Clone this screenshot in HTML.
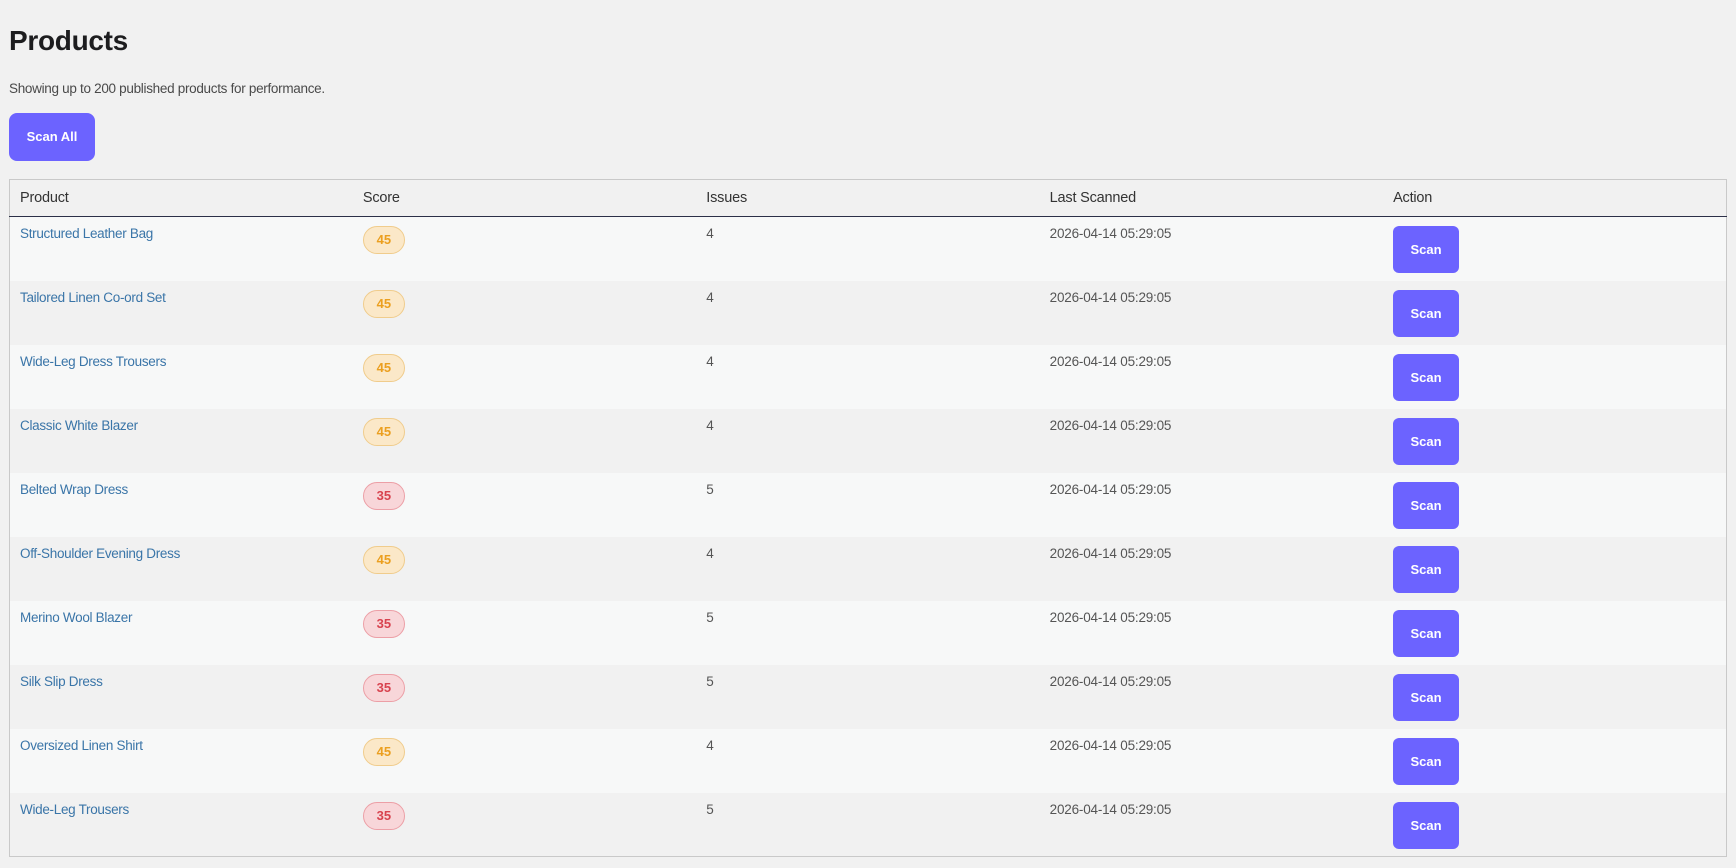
<!DOCTYPE html>
<html><head><meta charset="utf-8"><style>
*{box-sizing:border-box;margin:0;padding:0}
body{width:1736px;height:868px;background:#f1f1f1;font-family:"Liberation Sans",sans-serif;color:#3c3c3c;overflow:hidden}
h1{position:absolute;left:9px;top:25px;font-size:28px;font-weight:bold;color:#1d1d1f;letter-spacing:-0.3px}
.sub{position:absolute;left:9px;top:81px;font-size:13.5px;color:#4a4a4a;letter-spacing:-0.3px}
.all{position:absolute;left:9px;top:113px;width:86px;height:48px;background:#6c63ff;border-radius:8px;color:#fff;font-weight:bold;font-size:13px;text-align:center;line-height:48px}
table{position:absolute;left:9px;top:179px;width:1718px;border:1px solid #c9c9c9;border-collapse:collapse;table-layout:fixed}
th{height:37px;text-align:left;font-weight:normal;font-size:14.5px;color:#333;padding:0 10px;border-bottom:1.5px solid #2c3048;background:#f1f1f1;letter-spacing:-0.2px}
td{height:64px;vertical-align:top;padding:9px 10px 0;font-size:13.5px;color:#555;letter-spacing:-0.2px}
tr:nth-child(even) td{background:#f7f8f8}
tr:nth-child(odd) td{background:#f1f1f1}
a{color:#3a75a8;text-decoration:none;letter-spacing:-0.3px}
.b{display:inline-block;width:42px;height:28px;border-radius:14px;text-align:center;line-height:26px;font-size:13px;font-weight:bold;letter-spacing:0}
.o{background:#fbe8c8;border:1px solid #f0cc8c;color:#eb9f1f}
.r{background:#f8d6d9;border:1px solid #ec9fa6;color:#d8434f}
.s{display:inline-block;width:66px;height:47px;background:#6c63ff;border-radius:6px;color:#fff;font-weight:bold;font-size:13px;text-align:center;line-height:47px;letter-spacing:0}
</style></head><body>
<h1>Products</h1>
<div class="sub">Showing up to 200 published products for performance.</div>
<div class="all">Scan All</div>
<table>
<tr><th>Product</th><th>Score</th><th>Issues</th><th>Last Scanned</th><th>Action</th></tr>
<tr><td><a>Structured Leather Bag</a></td><td><span class="b o">45</span></td><td>4</td><td>2026-04-14 05:29:05</td><td><span class="s">Scan</span></td></tr>
<tr><td><a>Tailored Linen Co-ord Set</a></td><td><span class="b o">45</span></td><td>4</td><td>2026-04-14 05:29:05</td><td><span class="s">Scan</span></td></tr>
<tr><td><a>Wide-Leg Dress Trousers</a></td><td><span class="b o">45</span></td><td>4</td><td>2026-04-14 05:29:05</td><td><span class="s">Scan</span></td></tr>
<tr><td><a>Classic White Blazer</a></td><td><span class="b o">45</span></td><td>4</td><td>2026-04-14 05:29:05</td><td><span class="s">Scan</span></td></tr>
<tr><td><a>Belted Wrap Dress</a></td><td><span class="b r">35</span></td><td>5</td><td>2026-04-14 05:29:05</td><td><span class="s">Scan</span></td></tr>
<tr><td><a>Off-Shoulder Evening Dress</a></td><td><span class="b o">45</span></td><td>4</td><td>2026-04-14 05:29:05</td><td><span class="s">Scan</span></td></tr>
<tr><td><a>Merino Wool Blazer</a></td><td><span class="b r">35</span></td><td>5</td><td>2026-04-14 05:29:05</td><td><span class="s">Scan</span></td></tr>
<tr><td><a>Silk Slip Dress</a></td><td><span class="b r">35</span></td><td>5</td><td>2026-04-14 05:29:05</td><td><span class="s">Scan</span></td></tr>
<tr><td><a>Oversized Linen Shirt</a></td><td><span class="b o">45</span></td><td>4</td><td>2026-04-14 05:29:05</td><td><span class="s">Scan</span></td></tr>
<tr><td><a>Wide-Leg Trousers</a></td><td><span class="b r">35</span></td><td>5</td><td>2026-04-14 05:29:05</td><td><span class="s">Scan</span></td></tr>
</table>
</body></html>
